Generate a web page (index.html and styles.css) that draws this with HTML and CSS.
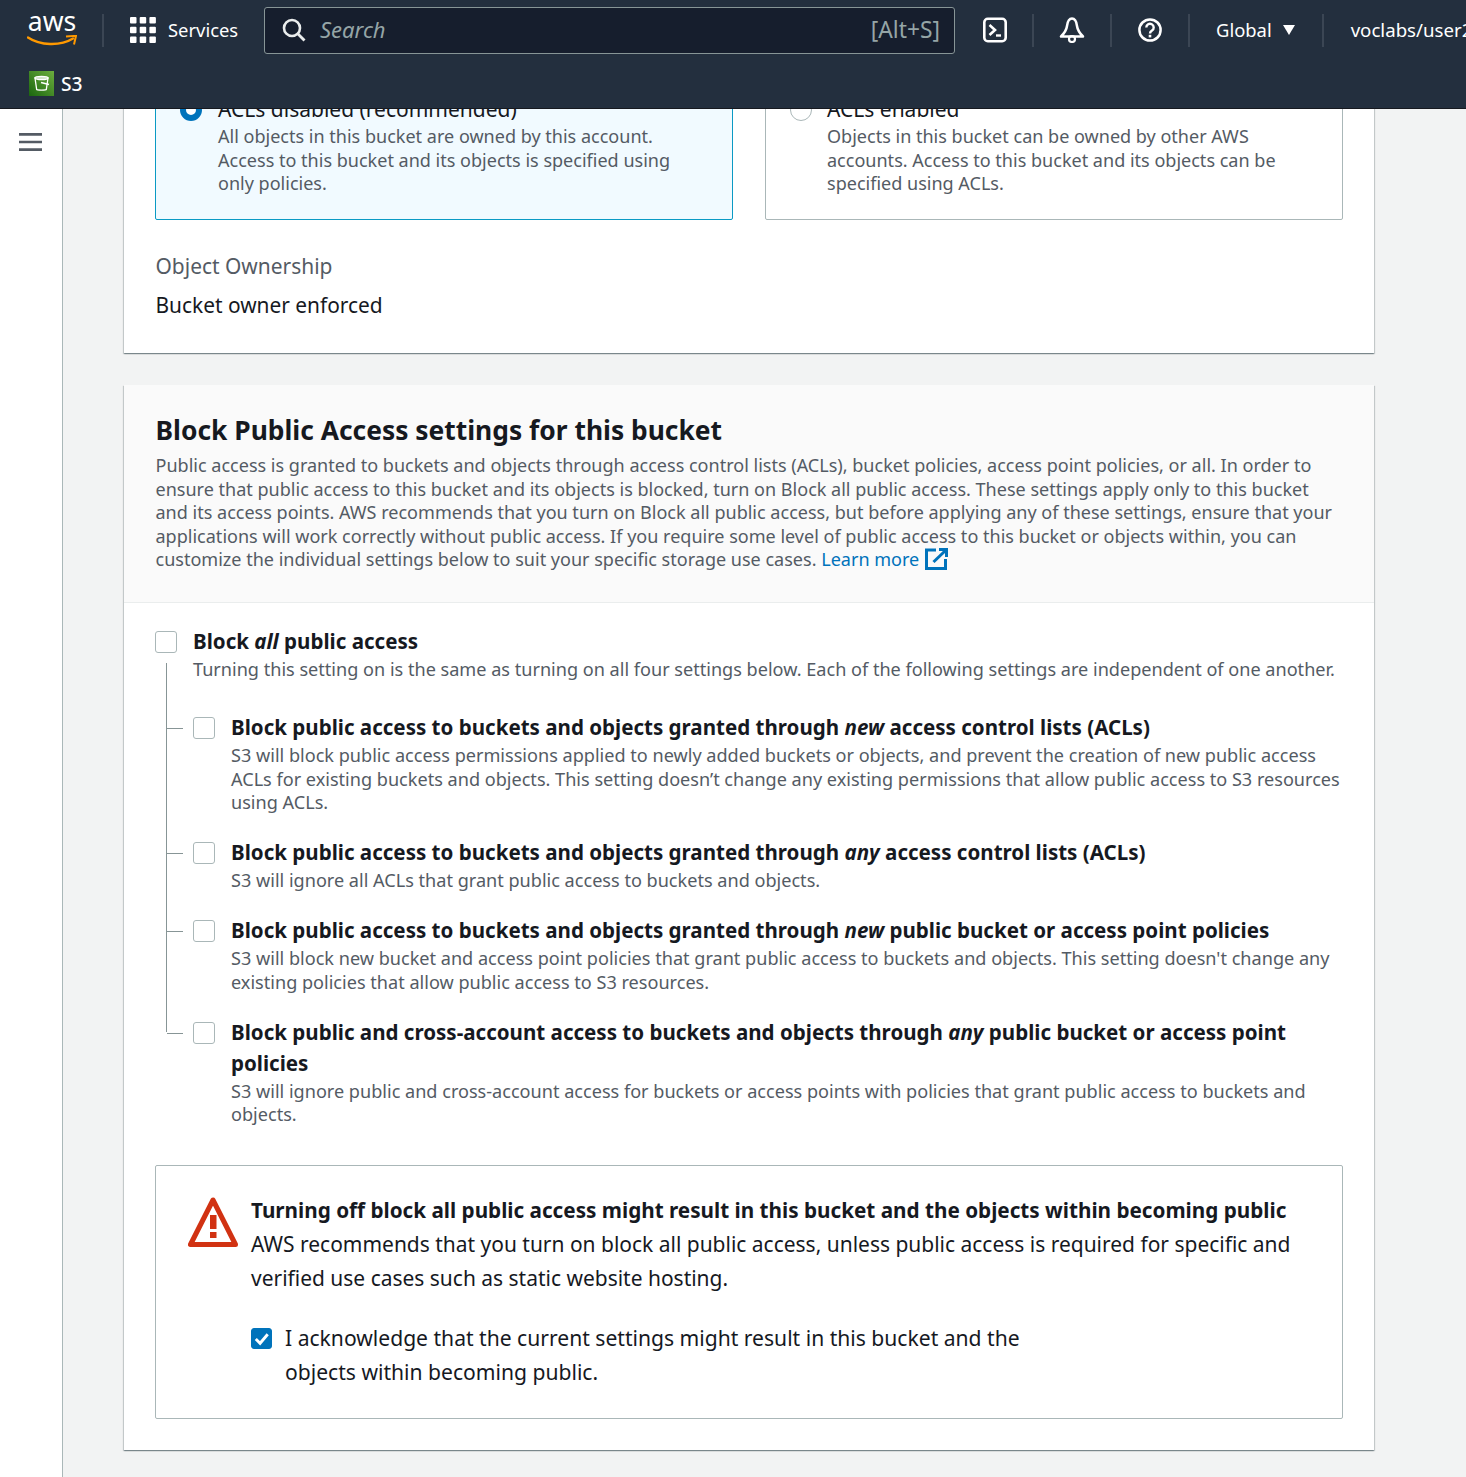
FILE: index.html
```html
<!DOCTYPE html>
<html lang="en">
<head>
<meta charset="utf-8">
<title>Create bucket - S3</title>
<link rel="stylesheet" href="styles.css">
</head>
<body>
<header class="topbar">
  <div class="nav-row">
    <div class="logo">
      <span class="logo-text">aws</span>
      <svg class="smile" viewBox="0 0 50 12"><path d="M1 2.500C13 10.500 33 11.500 46 3.500" fill="none" stroke="#f90" stroke-width="2.400" stroke-linecap="round"/><path d="M39 1.600 49 .8 47 9.500" fill="none" stroke="#f90" stroke-width="2"/></svg>
    </div>
    <span class="sep sep-logo"></span>
    <svg class="grid-icon" viewBox="0 0 26 26"><g fill="#fff"><rect x="0" y="0" width="6.500" height="6.500" rx="1"/><rect x="9.700" y="0" width="6.500" height="6.500" rx="1"/><rect x="19.400" y="0" width="6.500" height="6.500" rx="1"/><rect x="0" y="9.700" width="6.500" height="6.500" rx="1"/><rect x="9.700" y="9.700" width="6.500" height="6.500" rx="1"/><rect x="19.400" y="9.700" width="6.500" height="6.500" rx="1"/><rect x="0" y="19.400" width="6.500" height="6.500" rx="1"/><rect x="9.700" y="19.400" width="6.500" height="6.500" rx="1"/><rect x="19.400" y="19.400" width="6.500" height="6.500" rx="1"/></g></svg>
    <span class="services">Services</span>
    <div class="search">
      <svg class="search-icon" viewBox="0 0 24 24"><circle cx="10" cy="10" r="8" fill="none" stroke="#eaeded" stroke-width="2.600"/><path d="M15.800 15.800 22.500 22.500" stroke="#eaeded" stroke-width="2.800"/></svg>
      <span class="search-text">Search</span>
      <span class="search-key">[Alt+S]</span>
    </div>
    <svg class="tool tool-shell" viewBox="0 0 24 26"><rect x="1.300" y="1.800" width="21.400" height="22.400" rx="3.500" fill="none" stroke="#fff" stroke-width="2.600"/><path d="M6.500 8 12 13 6.500 18" fill="none" stroke="#fff" stroke-width="2.600"/><path d="M13 18.500h5" stroke="#fff" stroke-width="2.400"/></svg>
    <span class="sep"></span>
    <svg class="tool tool-bell" viewBox="0 0 26 26"><path d="M13 1.500 C9.500 1.500 8.500 5 8 9 C7.500 13 5 16.500 2 19.500 H24 C21 16.500 18.500 13 18 9 C17.500 5 16.500 1.500 13 1.500Z" fill="none" stroke="#fff" stroke-width="2.500" stroke-linejoin="round"/><circle cx="13" cy="22" r="3" fill="none" stroke="#fff" stroke-width="2.200"/></svg>
    <span class="sep"></span>
    <svg class="tool tool-help" viewBox="0 0 24 24"><circle cx="12" cy="12" r="10.600" fill="none" stroke="#fff" stroke-width="2.500"/><path d="M8.300 9.500a3.700 3.700 0 1 1 5.700 3.100c-1.300.9-2 1.500-2 3" fill="none" stroke="#fff" stroke-width="2.400"/><rect x="10.700" y="16.800" width="2.600" height="2.600" fill="#fff"/></svg>
    <span class="sep"></span>
    <span class="region">Global</span>
    <span class="caret"></span>
    <span class="sep sep-user"></span>
    <span class="user">voclabs/user2</span>
  </div>
  <div class="service-row">
    <span class="s3-badge">
      <svg viewBox="0 0 25 25"><path d="M6 7h13l-1.700 11.500c-.2.800-9.400.8-9.600 0Z" fill="none" stroke="#fff" stroke-width="1.300"/><ellipse cx="12.500" cy="7" rx="6.500" ry="1.700" fill="none" stroke="#fff" stroke-width="1.300"/><path d="M12 11.500 20 13.500" stroke="#fff" stroke-width="1.300"/></svg>
    </span>
    <span class="s3-label">S3</span>
  </div>
</header>

<div class="layout">
  <aside class="sidenav">
    <svg class="menu-icon" viewBox="0 0 24 20"><path d="M0 2h24M0 10h24M0 18h24" stroke="#545b64" stroke-width="2.800"/></svg>
  </aside>
  <main class="content">
    <section class="card card-ownership">
      <div class="tiles">
        <div class="tile tile-selected">
          <span class="radio radio-on"></span>
          <div class="tile-body">
            <div class="tile-title">ACLs disabled (recommended)</div>
            <p class="tile-desc">All objects in this bucket are owned by this account. Access to this bucket and its objects is specified using only policies.</p>
          </div>
        </div>
        <div class="tile">
          <span class="radio"></span>
          <div class="tile-body">
            <div class="tile-title">ACLs enabled</div>
            <p class="tile-desc">Objects in this bucket can be owned by other AWS accounts. Access to this bucket and its objects can be specified using ACLs.</p>
          </div>
        </div>
      </div>
      <div class="kv-label">Object Ownership</div>
      <div class="kv-value">Bucket owner enforced</div>
    </section>

    <section class="card card-block">
      <div class="card-head">
        <h2 class="card-title">Block Public Access settings for this bucket</h2>
        <p class="card-desc">Public access is granted to buckets and objects through access control lists (ACLs), bucket policies, access point policies, or all. In order to ensure that public access to this bucket and its objects is blocked, turn on Block all public access. These settings apply only to this bucket and its access points. AWS recommends that you turn on Block all public access, but before applying any of these settings, ensure that your applications will work correctly without public access. If you require some level of public access to this bucket or objects within, you can customize the individual settings below to suit your specific storage use cases. <a class="link" href="#">Learn more</a>
          <svg class="ext-icon" viewBox="0 0 23 22"><path d="M11 2H1.500v18.500h19V11" fill="none" stroke="#0073bb" stroke-width="3"/><path d="M14 1.500h7.500V9" fill="none" stroke="#0073bb" stroke-width="3"/><path d="M20.500 2.500 8.500 14" stroke="#0073bb" stroke-width="3"/></svg>
        </p>
      </div>
      <div class="card-body">
        <div class="option">
          <span class="check"></span>
          <div class="option-text">
            <div class="option-title">Block <em>all</em> public access</div>
            <p class="option-desc">Turning this setting on is the same as turning on all four settings below. Each of the following settings are independent of one another.</p>
          </div>
        </div>
        <div class="tree">
          <div class="option sub">
            <span class="check"></span>
            <div class="option-text">
              <div class="option-title">Block public access to buckets and objects granted through <em>new</em> access control lists (ACLs)</div>
              <p class="option-desc">S3 will block public access permissions applied to newly added buckets or objects, and prevent the creation of new public access ACLs for existing buckets and objects. This setting doesn’t change any existing permissions that allow public access to S3 resources using ACLs.</p>
            </div>
          </div>
          <div class="option sub">
            <span class="check"></span>
            <div class="option-text">
              <div class="option-title">Block public access to buckets and objects granted through <em>any</em> access control lists (ACLs)</div>
              <p class="option-desc">S3 will ignore all ACLs that grant public access to buckets and objects.</p>
            </div>
          </div>
          <div class="option sub">
            <span class="check"></span>
            <div class="option-text">
              <div class="option-title">Block public access to buckets and objects granted through <em>new</em> public bucket or access point policies</div>
              <p class="option-desc">S3 will block new bucket and access point policies that grant public access to buckets and objects. This setting doesn't change any existing policies that allow public access to S3 resources.</p>
            </div>
          </div>
          <div class="option sub">
            <span class="check"></span>
            <div class="option-text">
              <div class="option-title">Block public and cross-account access to buckets and objects through <em>any</em> public bucket or access point policies</div>
              <p class="option-desc">S3 will ignore public and cross-account access for buckets or access points with policies that grant public access to buckets and objects.</p>
            </div>
          </div>
        </div>
        <div class="warning">
          <svg class="warn-icon" viewBox="0 0 50 50"><path d="M25 3 2.500 47.500h45Z" fill="none" stroke="#d13212" stroke-width="5" stroke-linejoin="round"/><rect x="22" y="18" width="6.500" height="14" fill="#d13212"/><rect x="22" y="35" width="6.500" height="6" fill="#d13212"/></svg>
          <div class="warn-body">
            <div class="warn-title">Turning off block all public access might result in this bucket and the objects within becoming public</div>
            <p class="warn-text">AWS recommends that you turn on block all public access, unless public access is required for specific and verified use cases such as static website hosting.</p>
            <div class="ack">
              <span class="check check-on"><svg viewBox="0 0 21 21"><path d="M4 10.500 8.500 15 16.500 5.500" fill="none" stroke="#fff" stroke-width="3"/></svg></span>
              <span class="ack-text">I acknowledge that the current settings might result in this bucket and the objects within becoming public.</span>
            </div>
          </div>
        </div>
      </div>
    </section>
  </main>
</div>
</body>
</html>
```
FILE: styles.css
```css
* { box-sizing: border-box; }
html, body { margin: 0; height: 100%; overflow: hidden; }
body {
  font-family: "Noto Sans", "Open Sans", sans-serif;
  font-size: 18.050px;
  color: #16191f;
  background: #f2f3f3;
}
p { margin: 0; }

.topbar {
  position: fixed;
  top: 0; left: 0; right: 0;
  z-index: 10;
  height: 109px;
  background: #232f3e;
  border-bottom: 1px solid #16191f;
  color: #fff;
  overflow: hidden;
}
.nav-row {
  height: 60px;
  display: flex;
  align-items: center;
  white-space: nowrap;
  padding-left: 27px;
}
.nav-row > * { flex: none; }
.logo { width: 50px; height: 36px; display: flex; flex-direction: column; align-items: center; }
.logo-text { font-size: 26.500px; line-height: 25px; height: 24px; margin-top: -3px; color: #fff; }
.smile { width: 50px; height: 12px; margin-top: 2px; }
.sep { width: 2px; height: 33px; background: #3b4654; margin: 0 26px; }
.sep-logo { margin: 0 26px 0 25px; }
.grid-icon { width: 26px; height: 26px; }
.services { font-size: 18.400px; margin: -2px 0 0 12px; width: 83px; }
.search {
  width: 691px; height: 47px; margin-left: 13px;
  background: #161e2d;
  border: 1px solid #879596;
  border-radius: 3px;
  display: flex; align-items: center;
  padding: 0 14px 0 17px;
}
.search-icon { width: 24px; height: 24px; flex: none; }
.search-text { font-size: 22px; font-style: italic; color: #95a5a6; margin: -2px 0 0 14px; flex: 1; }
.search-key { font-size: 22.800px; color: #95a5a6; margin-top: -2px; }
.tool-shell { width: 24px; height: 26px; margin: 0 -1px 0 28px; }
.tool-bell { width: 26px; height: 26px; margin: 0 -1px; }
.tool-help { width: 24px; height: 24px; }
.region { font-size: 18.400px; margin-top: -2px; }
.caret {
  width: 0; height: 0; margin-left: 11px;
  border-left: 6px solid transparent;
  border-right: 6px solid transparent;
  border-top: 10px solid #fff;
}
.sep-user { margin: 0 27px; }
.user { font-size: 18.670px; margin-top: -2px; }
.service-row { height: 46px; display: flex; align-items: center; padding-left: 29px; }
.s3-badge {
  width: 25px; height: 25px; flex: none; display: block;
  background: linear-gradient(45deg, #1b660f, #6cae3e);
}
.s3-badge svg { display: block; width: 25px; height: 25px; }
.s3-label { font-size: 19.200px; font-weight: 500; margin-left: 7px; }

.layout { display: flex; height: 100%; }
.sidenav {
  width: 63px; flex: none;
  background: #fff;
  border-right: 1px solid #aab7b8;
  padding: 132px 0 0 19px;
}
.menu-icon { display: block; width: 23px; height: 20px; }
.content { flex: none; width: 1312px; padding: 60px 0 0 61px; }

.card {
  width: 1250px;
  background: #fff;
  box-shadow: 0 1px 1px 0 rgba(0,28,36,.3), 1px 1px 1px 0 rgba(0,28,36,.15), -1px 1px 1px 0 rgba(0,28,36,.15);
}
.card-ownership { height: 293px; padding: 25px 31px 0; margin-bottom: 32px; }
.tiles { display: flex; gap: 32px; }
.tile {
  width: 578px; height: 135px;
  display: flex;
  border: 1px solid #aab7b8;
  border-radius: 2px;
  padding: 10px 30px 0 24px;
}
.tile-selected { background: #f1faff; border-color: #0a9ac4; }
.radio {
  width: 22px; height: 22px; flex: none;
  border-radius: 50%;
  border: 1px solid #aab7b8;
  background: #fff;
  margin-top: 3px;
}
.radio-on { border: 6px solid #0073bb; }
.tile-body { margin-left: 15px; }
.tile-selected .tile-body { margin-left: 16px; }
.tile-title { font-size: 21px; line-height: 26px; color: #16191f; }
.tile-desc { font-size: 18.050px; line-height: 23.500px; color: #545b64; margin-top: 3px; }
.kv-label { font-size: 20.950px; line-height: 28px; color: #545b64; margin: 32px 0 0; padding-left: .5px; }
.kv-value { font-size: 20.900px; line-height: 28px; color: #16191f; margin: 11px 0 0; padding-left: .5px; }

.card-block { height: 1065px; }
.card-head {
  height: 218px;
  padding: 27px 32px 0 31.500px;
  background: #fafafa;
  border-bottom: 1px solid #eaeded;
}
.card-title { font-size: 26.400px; line-height: 36px; font-weight: 700; margin: 0 0 6px; color: #16191f; }
.card-desc { font-size: 18.050px; line-height: 23.500px; color: #545b64; }
.link { color: #0073bb; text-decoration: none; }
.ext-icon { width: 23px; height: 22px; vertical-align: -4px; margin-left: 1px; }
.card-body { padding: 24px 31px 0 31px; }

.option { display: flex; }
.check {
  width: 22px; height: 22px; flex: none;
  border: 1px solid #aab7b8;
  border-radius: 3px;
  background: #fff;
  margin-top: 4px;
}
.check svg { display: block; width: 20px; height: 20px; }
.check-on { background: #0073bb; border-color: #0073bb; margin-top: 0; }
.option-text { margin: -1px 0 0 16px; }
.option-title { font-size: 20.550px; line-height: 31px; font-weight: 700; color: #16191f; }
.option-desc { font-size: 18.100px; line-height: 23.500px; color: #545b64; margin-top: 1px; }
.tree {
  margin: -19px 0 0 11px;
  padding: 50.500px 0 0 0;
  border-left: 1px solid #879596;
  height: 369px;
}
.sub { margin-left: 26px; position: relative; margin-bottom: 23.500px; }
.sub::before {
  content: "";
  position: absolute;
  left: -26px; top: 15px;
  width: 16px; height: 1px;
  background: #879596;
}
.warning {
  display: flex;
  width: 1188px; height: 254px;
  margin-top: 133px;
  border: 1px solid #aab7b8;
  border-radius: 2px;
  padding: 31px 40px 0 32px;
}
.warn-icon { width: 50px; height: 50px; flex: none; }
.warn-body { margin: -1px 0 0 13px; }
.warn-title { font-size: 20.700px; line-height: 28px; font-weight: 700; }
.warn-text { font-size: 20.980px; line-height: 34px; margin-top: 3px; }
.ack { display: flex; margin-top: 26px; }
.ack .check { width: 21px; height: 21px; margin-top: 7px; }
.ack-text { font-size: 21.100px; line-height: 34px; margin-left: 13px; width: 760px; }
```
